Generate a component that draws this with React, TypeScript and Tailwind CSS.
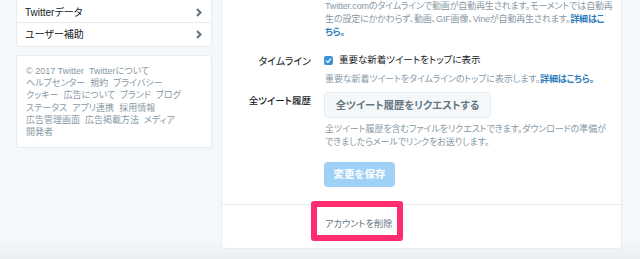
import React from 'react';

const footerLines: string[][] = [
  ['© 2017 Twitter', 'Twitterについて'],
  ['ヘルプセンター', '規約', 'プライバシー'],
  ['クッキー', '広告について', 'ブランド', 'ブログ'],
  ['ステータス', 'アプリ連携', '採用情報'],
  ['広告管理画面', '広告掲載方法', 'メディア'],
  ['開発者'],
];

const Chevron = () => (
  <svg width="6" height="9" viewBox="0 0 6 9" className="text-[#66757f]">
    <polyline points="1,1 4.5,4.5 1,8" fill="none" stroke="currentColor" strokeWidth="2.2" />
  </svg>
);

const NavRow = ({ label, last }: { label: string; last?: boolean }) => (
  <div className={`flex h-[23px] items-center justify-between pl-2 pr-[9px] ${last ? '' : 'border-b border-[#e6ecf0] pt-[2px]'}`}>
    <span className="whitespace-nowrap text-[10px] text-[#14171a]">{label}</span>
    <Chevron />
  </div>
);

const Link = ({ children }: { children: React.ReactNode }) => (
  <span className="font-bold text-[#2b7bb9]">{children}</span>
);

export default function App() {
  return (
    <div className="flex h-[259px] overflow-hidden bg-[linear-gradient(to_bottom,#f5f8fa_240px,#eceff1)] pl-4 font-['Liberation_Sans','Noto_Sans_CJK_JP',sans-serif] [font-feature-settings:'palt']">
      {/* left column */}
      <div className="flex w-[196px] shrink-0 flex-col gap-2">
        <div className="rounded-b-[3px] border border-t-0 border-[#e6ecf0] bg-white">
          <NavRow label="Twitterデータ" />
          <NavRow label="ユーザー補助" last />
        </div>
        <div className="rounded-[3px] border border-[#e6ecf0] bg-white px-[9px] pt-[9px] pb-[9px]">
          {footerLines.map((line, i) => (
            <div key={i} className="flex gap-[5px] whitespace-nowrap text-[9px] leading-[12.2px] text-[#8899a6]">
              {line.map((t) => (
                <span key={t}>{t}</span>
              ))}
            </div>
          ))}
        </div>
      </div>

      {/* settings card */}
      <div className="ml-[9px] mb-[10px] w-[401px] shrink-0 rounded-b-[4px] border border-t-0 border-[#e6ecf0] bg-white">
        <div className="pl-[103px]">
          <p className="whitespace-nowrap text-[9px] leading-[13px] tracking-[-0.15px] text-[#8899a6]">
            Twitter.comのタイムラインで動画が自動再生されます。モーメントでは自動再
            <br />
            生の設定にかかわらず、動画、GIF画像、Vineが自動再生されます。<Link>詳細はこ</Link>
            <br />
            <Link>ちら。</Link>
          </p>
        </div>

        <div className="mt-[14px] flex">
          <div className="w-[89px] pt-[1px] text-right text-[10px] text-[#14171a]">タイムライン</div>
          <div className="ml-[13px]">
            <div className="flex items-center gap-[6px]">
              <span className="flex h-[9px] w-[9px] items-center justify-center rounded-[2px] bg-[#3b94d9]">
                <svg width="7" height="7" viewBox="0 0 7 7">
                  <polyline points="1,3.6 2.8,5.4 6,1.6" fill="none" stroke="white" strokeWidth="1.3" />
                </svg>
              </span>
              <span className="whitespace-nowrap text-[9.5px] text-[#14171a]">重要な新着ツイートをトップに表示</span>
            </div>
            <p className="mt-[6px] pl-[1px] whitespace-nowrap text-[9px] leading-[13px] tracking-[-0.1px] text-[#8899a6]">
              重要な新着ツイートをタイムラインのトップに表示します。<Link>詳細はこちら。</Link>
            </p>
          </div>
        </div>

        <div className="mt-[6px] flex">
          <div className="w-[89px] pt-[2px] text-right text-[9.5px] font-medium text-[#14171a]">全ツイート履歴</div>
          <div className="ml-[13px]">
            <button className="flex h-[26px] w-[167px] items-center justify-center whitespace-nowrap rounded-[4px] border border-[#e6ecf0] bg-[#f5f8fa] text-[10.3px] font-bold text-[#66757f]">
              全ツイート履歴をリクエストする
            </button>
            <p className="mt-[5px] pl-[1px] whitespace-nowrap text-[9px] leading-[13px] tracking-[-0.1px] text-[#8899a6]">
              全ツイート履歴を含むファイルをリクエストできます。ダウンロードの準備が
              <br />
              できましたらメールでリンクをお送りします。
            </p>
            <button className="mt-[13px] flex h-[25px] w-[71px] items-center justify-center rounded-[4px] bg-[#9fd0f5] text-[10.5px] font-bold text-white">
              変更を保存
            </button>
          </div>
        </div>

        <div className="mt-[17px] border-t border-[#e6ecf0] pt-[5px] pl-[103px]">
          <span className="relative inline-block whitespace-nowrap text-[9.2px] text-[#66757f]">
            アカウントを削除
            <span className="absolute -top-[17px] -left-[14px] h-[40px] w-[92px] rounded-[3px] border-[6px] border-[#ff2d70]" />
          </span>
        </div>
      </div>
    </div>
  );
}
